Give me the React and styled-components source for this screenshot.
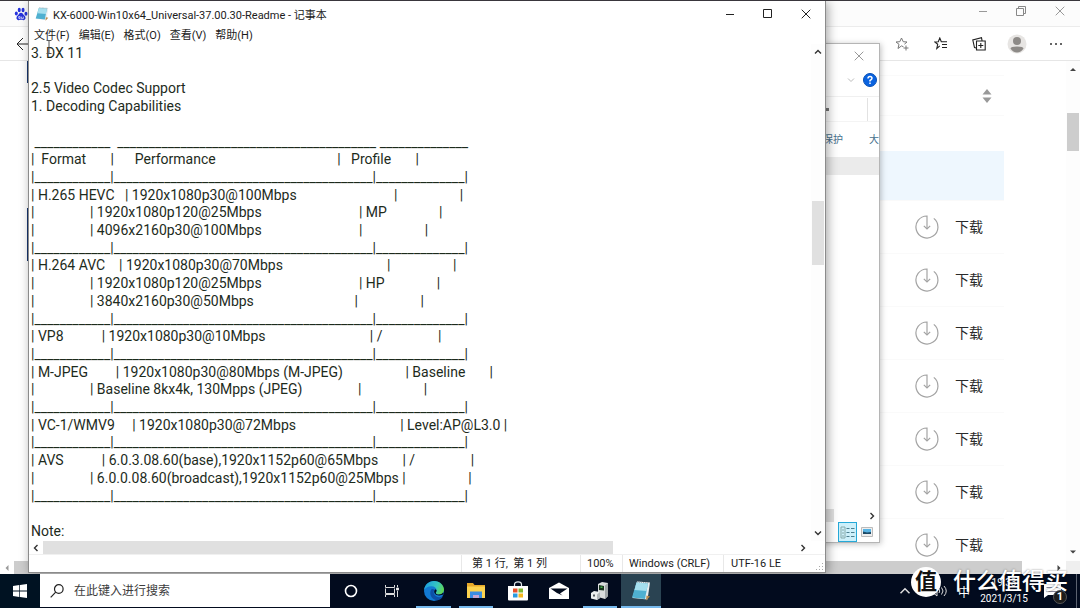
import React from "react"
import styled, { createGlobalStyle, css } from "styled-components"

const GlobalStyle = createGlobalStyle`
  *{
    box-sizing: border-box;
  }
  body{
    margin: 0;
    overflow: hidden;
    background: #fff;
    color: #1b1b1b;
    font-family: Roboto, "Noto Sans CJK SC", sans-serif;
    font-size: 11px;
  }
  button, input, textarea{
    font: inherit;
    color: inherit;
    border: 0;
    padding: 0;
    margin: 0;
    background: none;
    outline: none;
  }
  a{
    color: inherit;
    text-decoration: none;
  }
  svg{
    display: block;
  }
`

const Desktop = styled.div`
  height: 100vh;
  display: flex;
  flex-direction: column;
`

const Workspace = styled.main`
  position: relative;
  flex: 1;
  min-height: 0;
  overflow: hidden;
  border-top: 1px solid #39363c;
`

const IconButton = styled.button`
  display: flex;
  align-items: center;
  justify-content: center;
  width: ${(props) => props.$w || 38}px;
  flex: none;
`

/* browser */

const Browser = styled.section`
  height: 100%;
  display: flex;
  flex-direction: column;
`

const TabStrip = styled.div`
  display: flex;
  justify-content: space-between;
  height: 26px;
  padding: 0 0 6px 14px;
  background: #fcfcfc;
  border-bottom: 1px solid #ececec;
`

const Controls = styled.div`
  display: flex;
`

const Toolbar = styled.div`
  display: flex;
  justify-content: space-between;
  height: 34px;
  padding: 0 5px 0 16px;
  border-bottom: 1px solid #e6e6e6;
`

const PageArea = styled.div`
  flex: 1;
  min-height: 0;
  display: flex;
`

const Page = styled.div`
  flex: 1;
  overflow: hidden;
  padding-right: 62px;
`

const SideMark = styled.div`
  width: 28px;
  display: flex;
  flex-direction: column;
  align-items: flex-end;
  gap: 125px;
`

const Mark = styled.span`
  width: 1px;
  height: ${(props) => props.$h}px;
  background: #17356e;
`

const SortHead = styled.div`
  display: flex;
  align-items: center;
  justify-content: flex-end;
  height: 41px;
  margin-top: 14px;
  padding-right: 12px;
  border-top: 1px solid #fafafa;
  border-bottom: 1px solid #fafafa;
`

const FileList = styled.ul`
  list-style: none;
  margin: 35px 0 0;
  padding: 0;
`

const FileRow = styled.li`
  display: flex;
  align-items: center;
  justify-content: flex-end;
  height: ${(props) => (props.$active ? 50 : 53)}px;
  padding-right: 21px;
  border-bottom: 1px solid #fafafa;
  background: ${(props) => (props.$active ? "#eef7fe" : "none")};
`

const Download = styled.a`
  display: flex;
  align-items: center;
  gap: 16px;
  font-size: 14px;
  line-height: 20px;
  color: #2a2a2a;
`

const VBar = styled.div`
  width: 14px;
  flex: none;
  display: flex;
  flex-direction: column;
  align-items: center;
  background: #fdfdfd;
`

const VThumb = styled.span`
  width: 12px;
  height: ${(props) => props.$h}px;
  background: ${(props) => props.$color || "#e0e0e0"};
`

const HBar = styled.div`
  display: flex;
  align-items: center;
  height: 13px;
  flex: none;
  padding-right: ${(props) => props.$end || 0}px;
`

const HThumb = styled.span`
  flex: ${(props) => props.$grow};
  align-self: stretch;
  background: ${(props) => props.$color || "#e0e0e0"};
`

const Fill = styled.span`
  flex: ${(props) => props.$grow || 1};
`

const Corner = styled.span`
  width: 14px;
  height: 13px;
  background: #efefef;
`

/* file explorer */

const windowFrame = css`
  position: absolute;
  display: flex;
  flex-direction: column;
  background: #fff;
`

const Explorer = styled.section`
  ${windowFrame}
  top: 42px;
  right: 200px;
  bottom: 31px;
  width: 240px;
  border: 1px solid #b5b5b5;
  box-shadow: 1px 1px 6px rgba(0, 0, 0, .25);
`

const ExplorerRow = styled.div`
  display: flex;
  justify-content: flex-end;
  align-items: center;
  height: ${(props) => props.$h}px;
  padding-right: ${(props) => props.$end || 0}px;
`

const Ribbon = styled.div`
  height: 26px;
  margin-top: 4px;
  padding: 0 11px 0 0;
  display: flex;
  justify-content: flex-end;
  align-items: center;
  gap: 38px;
  border-top: 1px solid #f0f0f0;
  border-bottom: 1px solid #f4f4f4;

  i{
    width: 3px;
    height: 3px;
    background: #777;
  }
  span{
    width: 1px;
    height: 23px;
    background: #e2e2e2;
  }
`

const RibbonLabels = styled.div`
  display: flex;
  justify-content: flex-end;
  gap: 26px;
  height: 35px;
  line-height: 35px;
  font-size: 10px;
  color: #46708c;
`

const ColumnBar = styled.div`
  height: 18px;
  background: #ebebeb;
`

const ExplorerBody = styled.div`
  flex: 1;
`

const ViewButton = styled(IconButton)`
  height: 20px;
  border: 1px solid ${(props) => (props.$on ? "#26a9d8" : "transparent")};
  background: ${(props) => (props.$on ? "#cdf0fa" : "none")};
`

/* notepad */

const Notepad = styled.section`
  ${windowFrame}
  top: 0;
  left: 28px;
  right: 254px;
  bottom: 1px;
  border: 1px solid #8b8b8b;
  border-top: 0;
  box-shadow: 2px 1px 10px rgba(0, 0, 0, .35);
`

const TitleBar = styled.header`
  display: flex;
  align-items: stretch;
  height: 26px;
  flex: none;
`

const Title = styled.h1`
  display: flex;
  align-items: center;
  gap: 4px;
  flex: 1;
  margin: 0;
  padding-left: 6px;
  font-size: 11px;
  font-weight: 400;
`

const MenuBar = styled.nav`
  display: flex;
  align-items: center;
  gap: 9px;
  height: 17px;
  flex: none;
  padding-left: 5px;

  button{
    line-height: 17px;
  }
`

const EditArea = styled.div`
  flex: 1;
  min-height: 0;
  display: flex;
`

const TextBox = styled.textarea`
  flex: 1;
  min-width: 0;
  resize: none;
  overflow: hidden;
  white-space: pre;
  padding: 1px 0 0 2px;
  font-size: 14px;
  line-height: 1.265;
  color: #1d2b1c;
`

const StatusBar = styled.footer`
  display: flex;
  justify-content: flex-end;
  height: 18px;
  flex: none;
  border-top: 1px solid #f0f0f0;
`

const StatusCell = styled.span`
  width: ${(props) => props.$w}px;
  padding-left: ${(props) => props.$pad || 7}px;
  line-height: 17px;
  border-left: 1px solid #e8e8e8;
  white-space: pre;
  position: relative;
`

const Grip = styled.svg`
  position: absolute;
  right: 1px;
  bottom: 1px;
`

const Caret = styled.svg`
  position: absolute;
  left: 45px;
  top: 39px;
`

/* taskbar */

const Taskbar = styled.div`
  position: relative;
  display: flex;
  height: 34px;
  flex: none;
  background: #020b1e;
  color: #fff;
`

const Start = styled(IconButton)`
  background: #001222;
`

const Search = styled.label`
  display: flex;
  align-items: center;
  gap: 10px;
  width: 290px;
  padding-left: 10px;
  margin-bottom: 1px;
  background: #fff;
  color: #333;

  input{
    flex: 1;
    font-size: 12px;
  }
  input::placeholder{
    color: #3c3c3c;
    opacity: 1;
  }
`

const Task = styled(IconButton)`
  background: ${(props) => (props.$active ? "#2a4352" : "none")};
  position: relative;

  &::after{
    content: '';
    display: ${(props) => (props.$open ? "block" : "none")};
    position: absolute;
    left: ${(props) => (props.$active ? 0 : 4)}px;
    right: ${(props) => (props.$active ? 0 : 4)}px;
    bottom: 0;
    height: 2px;
    background: #76b9ed;
  }
`

const Tray = styled.div`
  display: flex;
  align-items: center;
  margin-left: auto;
  padding-right: 8px;
  border-right: 1px solid #5b6270;
  margin-right: 3px;
`

const Ime = styled.span`
  width: 16px;
  font-size: 12px;
  text-align: center;
`

const Clock = styled.time`
  width: 64px;
  text-align: center;
  font-size: 10px;
  line-height: 16px;
`

const Notice = styled.button`
  position: relative;
  width: 32px;
  height: 34px;
`

const Count = styled.span`
  position: absolute;
  right: 1px;
  bottom: 4px;
  width: 14px;
  height: 14px;
  border-radius: 50%;
  border: 1px solid #555;
  background: #1c1c1c;
  font-size: 11px;
  font-weight: 700;
  line-height: 12px;
  text-align: center;
`

const Watermark = styled.div`
  position: absolute;
  right: 12px;
  bottom: 10px;
  display: flex;
  align-items: center;
  gap: 12px;
  font-size: 23px;
  font-weight: 500;
  line-height: 32px;
  color: #fff;
  text-shadow: 0 0 2px rgba(0, 0, 0, .5);
`

const Seal = styled.span`
  width: 30px;
  height: 30px;
  border-radius: 50%;
  background: #fff;
  color: #111;
  font-size: 22px;
  font-weight: 700;
  line-height: 30px;
  text-align: center;
  text-shadow: none;
`

const sp = (n) => " ".repeat(n)
const line = (n) => "_".repeat(n)
const rule = `|${line(12)}|${line(41)}|${line(14)}|`

const readme = [
  "3. DX 11",
  "",
  "2.5 Video Codec Support",
  "1. Decoding Capabilities",
  "",
  ` ${line(12)}  ${line(41)} ${line(14)}`,
  `|${sp(2)}Format${sp(7)}|${sp(6)}Performance${sp(35)}|${sp(3)}Profile${sp(7)}|`,
  rule,
  `| H.265 HEVC${sp(3)}| 1920x1080p30@100Mbps${sp(28)}|${sp(18)}|`,
  `|${sp(16)}| 1920x1080p120@25Mbps${sp(28)}| MP${sp(15)}|`,
  `|${sp(16)}| 4096x2160p30@100Mbps${sp(28)}|${sp(18)}|`,
  rule,
  `| H.264 AVC${sp(4)}| 1920x1080p30@70Mbps${sp(30)}|${sp(18)}|`,
  `|${sp(16)}| 1920x1080p120@25Mbps${sp(28)}| HP${sp(15)}|`,
  `|${sp(16)}| 3840x2160p30@50Mbps${sp(29)}|${sp(18)}|`,
  rule,
  `| VP8${sp(11)}| 1920x1080p30@10Mbps${sp(30)}| /${sp(16)}|`,
  rule,
  `| M-JPEG${sp(8)}| 1920x1080p30@80Mbps (M-JPEG)${sp(18)}| Baseline${sp(7)}|`,
  `|${sp(16)}| Baseline 8kx4k, 130Mpps (JPEG)${sp(16)}|${sp(18)}|`,
  rule,
  `| VC-1/WMV9${sp(5)}| 1920x1080p30@72Mbps${sp(30)}| Level:AP@L3.0 |`,
  rule,
  `| AVS${sp(11)}| 6.0.3.08.60(base),1920x1152p60@65Mbps${sp(7)}| /${sp(16)}|`,
  `|${sp(16)}| 6.0.0.08.60(broadcast),1920x1152p60@25Mbps |${sp(18)}|`,
  rule,
  "",
  "Note:",
].join("\n")

const menus = ["文件(F)", "编辑(E)", "格式(O)", "查看(V)", "帮助(H)"]

const chevrons = {
  up: "M1 5.5 4 2.5 7 5.5",
  down: "M1 2.5 4 5.5 7 2.5",
  left: "M5.5 1 2.5 4 5.5 7",
  right: "M2.5 1 5.5 4 2.5 7",
}

const Chevron = ({ dir, size = 8, color = "#333", width = 1.4 }) => (
  <svg width={size} height={size} viewBox="0 0 8 8" fill="none" stroke={color} strokeWidth={width}>
    <path d={chevrons[dir]} />
  </svg>
)

const Triangle = ({ d, color = "#444" }) => (
  <svg width="8" height="8" viewBox="0 0 8 8"><path d={d} fill={color} /></svg>
)

const CloseIcon = ({ color }) => (
  <svg width="10" height="10" viewBox="0 0 10 10" stroke={color}><path d="M.7.7l8.6 8.6M9.3.7.7 9.3" /></svg>
)

const MinIcon = ({ color }) => (
  <svg width="10" height="10" viewBox="0 0 10 10" stroke={color}><path d="M1 5.5h8" /></svg>
)

const NotepadIcon = ({ size }) => (
  <svg width={size} height={size} viewBox="0 0 20 20">
    <path d="M6 .5 19 1.5 16.500 18.500 1.500 17z" fill="#e9eef0" />
    <path d="M15.500 14.500 19 15.500 15 19.500z" fill="#b98a4a" />
    <path d="M5.500 1.500 17 2.500 14 18 1 16.500z" fill="#4fb0d0" />
    <path d="M5.500 1.500 17 2.500 15.500 10 3.500 9z" fill="#a5dfee" />
    <path d="M6 1 18.500 2" stroke="#9aa7ab" strokeDasharray="1 1" />
  </svg>
)

const Paw = () => (
  <svg width="14" height="14" viewBox="0 0 24 24" fill="#2632dc">
    <ellipse cx="4" cy="11" rx="2.6" ry="3.5" />
    <ellipse cx="9" cy="5" rx="2.6" ry="3.8" />
    <ellipse cx="15.5" cy="5" rx="2.6" ry="3.8" />
    <ellipse cx="20.5" cy="11.5" rx="2.6" ry="3.5" />
    <path d="M12 10c-3 0-3.500 3-6 5-2.700 2.200-2.500 7.500 2 7.500 2 0 2.500-.5 4-.5s2 .5 4 .5c4.500 0 4.700-5.300 2-7.500-2.500-2-3-5-6-5z" />
    <path d="M8 16.500h2.500v3.500H8.500zM13 16.500v3.500h3v-3.500" fill="none" stroke="#fff" strokeWidth="1.200" />
  </svg>
)

const DownloadIcon = () => (
  <svg width="24" height="24" viewBox="0 0 24 24" fill="none" stroke="#a3a3a3" strokeWidth="1.200">
    <path d="M12 14V1A11 11 0 1 0 18.800 3.400" />
    <path d="M8.800 10.800 12 14l3.200-3.200" />
  </svg>
)

const Edge = () => (
  <svg width="22" height="22" viewBox="0 0 22 22">
    <defs>
      <linearGradient id="edgeTop" x1="0" x2="1" y1=".3" y2=".6">
        <stop offset="0" stopColor="#1b9de2" />
        <stop offset=".6" stopColor="#36c6c0" />
        <stop offset="1" stopColor="#62d84e" />
      </linearGradient>
    </defs>
    <circle cx="11" cy="11" r="10" fill="#1279d2" />
    <path d="M1 10.500C1.500 4.500 6 1 11 1c6 0 10 4.300 10 8.500 0 3-2.300 5-5 5-2.200 0-3.300-.8-3.300-1.600 0-.7.900-1 .9-2.600C13.600 8 11.500 6.300 8.500 6.300 4.800 6.300 2 8 1 10.500z" fill="url(#edgeTop)" />
    <path d="M8.200 9.500c-2.500 4.500.3 10 5.800 10.800 2.300 0 4.700-1.600 6-4-3.500 1.700-7.800.7-9-2.300-.8-2-.2-3.500.7-4.200-1-.900-2.600-1-3.500-.3z" fill="#0d4fa6" />
    <path d="M13.600 10.300c0 1.600-.9 1.900-.9 2.600 0 .8 1.100 1.600 3.300 1.600 1.700 0 3.200-.8 4.100-2l.5 1.500c-3 2.500-8.600 1.500-9.300-1.500-.3-1.500.2-2.800 1.300-3.200z" fill="#020b1e" />
  </svg>
)

const Folder = () => (
  <svg width="20" height="18" viewBox="0 0 20 18">
    <path d="M1 1h6l1.500 2H19v3H1z" fill="#e6a829" />
    <path d="M1 4.500h18V16H1z" fill="#fcd34f" />
    <path d="M4 16V9.500h12V16h-3v-3H7v3z" fill="#3b8de0" />
    <path d="M7 13h6v3H7z" fill="#c7a6cf" />
  </svg>
)

const Store = () => (
  <svg width="20" height="20" viewBox="0 0 20 20">
    <path d="M6.500 5V3.500C6.500 2 8 .8 10 .8s3.500 1.200 3.500 2.700V5" fill="none" stroke="#dfe6ea" strokeWidth="1.200" />
    <path d="M0 5h20v13.500q0 1-1 1H1q-1 0-1-1z" fill="#fff" />
    <path d="M5 7.500h4.500v4H5z" fill="#e8502b" />
    <path d="M10.500 7.500H15v4h-4.500z" fill="#7db72f" />
    <path d="M5 12.500h4.500v4H5z" fill="#2a9be0" />
    <path d="M10.500 12.500H15v4h-4.500z" fill="#f5b71f" />
  </svg>
)

const Mail = () => (
  <svg width="22" height="18" viewBox="0 0 22 18">
    <path d="M1 6 11 .5 21 6v11H1z" fill="#fff" />
    <path d="M2.500 6.500h17L12 11.500l2.500 2L9 11z" fill="#020b1e" />
  </svg>
)

const Device = () => (
  <svg width="20" height="20" viewBox="0 0 20 20">
    <path d="M8 3 12 1l6 1v13l-3 3-7-2z" fill="#d9dcdd" />
    <path d="M15 4.500 18 2v13l-3 3z" fill="#9fa5a8" />
    <path d="M9 4 14 5v4.500L9 9z" fill="#17321c" />
    <path d="M10.500 5.500h2V7h-2z" fill="#3fae49" />
    <path d="M1 12 4 10l6 1v6l-3 2-6-1.500z" fill="#eceeef" />
    <path d="M3 13.500h2v2H3zM7 14h1.500v2H7z" fill="#555b60" />
    <path d="M7 13.500 10 11v6l-3 2z" fill="#b2b7ba" />
  </svg>
)

const downloads = [1, 2, 3, 4, 5, 6, 7]

function BrowserWindow() {
  return (
    <Browser>
      <TabStrip>
        <IconButton $w={14} aria-label="tab"><svg width="14" height="22" viewBox="0 -7 14 22"><Paw /></svg></IconButton>
        <Controls>
          <IconButton $w={38} aria-label="minimize"><MinIcon color="#999" /></IconButton>
          <IconButton $w={38} aria-label="restore">
            <svg width="10" height="10" viewBox="0 0 10 10" fill="none" stroke="#888">
              <path d="M.5 2.500h7v7h-7zM2.500 2.500v-2h7v7h-2" />
            </svg>
          </IconButton>
          <IconButton $w={40} aria-label="close"><CloseIcon color="#999" /></IconButton>
        </Controls>
      </TabStrip>
      <Toolbar>
        <IconButton $w={14} aria-label="back">
          <svg width="14" height="14" viewBox="0 0 14 14" fill="none" stroke="#222"><path d="M14 7H1.500M7 1 1 7l6 6" /></svg>
        </IconButton>
        <Controls>
          <IconButton $w={38} aria-label="add favorite">
            <svg width="14" height="14" viewBox="0 0 14 14" fill="none" stroke="#777">
              <path d="M8.500 9.800 6.500 8.900 3 11.500l1-4.200L1 5l3.800-.3L6.500 1l1.700 3.700 3.800.3-2.600 2.200M11 8.500v5M8.500 11h5" />
            </svg>
          </IconButton>
          <IconButton $w={40} aria-label="favorites">
            <svg width="14" height="14" viewBox="0 0 14 14" fill="none" stroke="#222" strokeWidth="1.100">
              <path d="M5.800 8.800 2.800 11.500l.9-4.200L.8 5l3.500-.3L5.800 1l1.500 3.700H13M8 7.500h5M8 10.500h5" />
            </svg>
          </IconButton>
          <IconButton $w={36} aria-label="collections">
            <svg width="14" height="14" viewBox="0 0 14 14" fill="none" stroke="#222" strokeWidth="1.100">
              <path d="M4.500 4h8.700v9H4.500zM8.800 6v5M6.300 8.500h5M4.300 11 2.500 10.500.8 3 9.500.8l.6 3" />
            </svg>
          </IconButton>
          <IconButton $w={40} aria-label="profile">
            <svg width="20" height="20" viewBox="0 0 20 20">
              <circle cx="10" cy="10" r="9.500" fill="#e7e5e3" />
              <circle cx="10" cy="7" r="4" fill="#8d8a87" />
              <path d="M3.500 14.500q0-2 6.500-2t6.500 2Q14 18.500 10 18.500t-6.500-4z" fill="#8d8a87" />
            </svg>
          </IconButton>
          <IconButton $w={38} aria-label="more">
            <svg width="14" height="4" viewBox="0 0 14 4" fill="#333">
              <circle cx="2" cy="2" r="1" /><circle cx="7" cy="2" r="1" /><circle cx="12" cy="2" r="1" />
            </svg>
          </IconButton>
        </Controls>
      </Toolbar>
      <PageArea>
        <SideMark><Mark $h={22} /><Mark $h={53} /></SideMark>
        <Page>
          <SortHead>
            <svg width="10" height="14" viewBox="0 0 10 14" fill="#999"><path d="M5 0l4.500 5.500h-9zM5 14l4.500-5.500h-9z" /></svg>
          </SortHead>
          <FileList>
            <FileRow $active />
            {downloads.map((id) => (
              <FileRow key={id}>
                <Download href="#"><DownloadIcon />下载</Download>
              </FileRow>
            ))}
          </FileList>
        </Page>
        <VBar>
          <IconButton $w={14} aria-label="scroll up"><svg width="8" height="14" viewBox="0 -4 8 14"><path d="M1 6 4 3l3 3z" fill="#444" /></svg></IconButton>
          <Fill $grow={38} />
          <VThumb $h={38} $color="#cdcdcd" />
          <Fill $grow={395} />
          <IconButton $w={14} aria-label="scroll down"><svg width="8" height="16" viewBox="0 -3 8 16"><path d="M1 2.500 4 5.500l3-3z" fill="#444" /></svg></IconButton>
        </VBar>
      </PageArea>
      <HBar>
        <IconButton $w={14} aria-label="scroll left"><Triangle d="M5.500 1 2.500 4l3 3z" color="#999" /></IconButton>
        <HThumb $grow={1008} $color="#cdcdcd" />
        <Fill $grow={30} />
        <IconButton $w={14} aria-label="scroll right"><Triangle d="M2.500 1 5.500 4l-3 3z" /></IconButton>
        <Corner />
      </HBar>
    </Browser>
  )
}

function ExplorerWindow() {
  return (
    <Explorer>
      <ExplorerRow $h={24}><IconButton $w={40} aria-label="close"><CloseIcon color="#999" /></IconButton></ExplorerRow>
      <ExplorerRow $h={24}>
        <IconButton $w={20} aria-label="collapse"><Chevron dir="down" color="#bbb" width={1} /></IconButton>
        <IconButton $w={18} aria-label="help">
          <svg width="14" height="14" viewBox="0 0 14 14">
            <circle cx="7" cy="7" r="6.500" fill="#0a63e0" stroke="#0850b4" />
            <path d="M5 5.500Q5 3.500 7 3.500t2 1.800Q9 6.500 7 7.500v1M7 9.500v1.400" fill="none" stroke="#fff" strokeWidth="1.500" />
          </svg>
        </IconButton>
      </ExplorerRow>
      <Ribbon><i /><span /></Ribbon>
      <RibbonLabels><span>保护</span><span>大</span></RibbonLabels>
      <ColumnBar />
      <ExplorerBody />
      <HBar>
        <HThumb $grow={193} />
        <Fill $grow={31} />
        <IconButton $w={14} aria-label="scroll right"><Chevron dir="right" /></IconButton>
      </HBar>
      <ExplorerRow $h={20} $end={3}>
        <ViewButton $w={19} $on aria-label="details">
          <svg width="15" height="13" viewBox="0 0 15 13" fill="none" stroke="#4c7f90">
            <path d="M1 1h4v11H1zM2 4h2M2 7h2M2 10h2" stroke="#8aa" />
            <path d="M6.500 2.500h3M11 2.500h3.500M6.500 6.500h3M11 6.500h3.500M6.500 10.500h3M11 10.500h3.500" />
          </svg>
        </ViewButton>
        <ViewButton $w={19} aria-label="thumbnails">
          <svg width="12" height="10" viewBox="0 0 12 10">
            <path d="M.5.5h11v9H.5z" fill="#eee" stroke="#bbb" />
            <path d="M2 2h8v5H2z" fill="#58b4e4" />
            <path d="M2 7V4.500l4 1L10 5v2z" fill="#1d4a66" />
          </svg>
        </ViewButton>
      </ExplorerRow>
    </Explorer>
  )
}

function NotepadWindow() {
  return (
    <Notepad>
      <TitleBar>
        <Title><NotepadIcon size={14} />KX-6000-Win10x64_Universal-37.00.30-Readme - 记事本</Title>
        <IconButton aria-label="minimize"><MinIcon color="#222" /></IconButton>
        <IconButton aria-label="maximize">
          <svg width="10" height="10" viewBox="0 0 10 10" fill="none" stroke="#222"><path d="M.5.5h8v8h-8z" /></svg>
        </IconButton>
        <IconButton aria-label="close"><CloseIcon color="#222" /></IconButton>
      </TitleBar>
      <MenuBar>
        {menus.map((name) => <button key={name}>{name}</button>)}
      </MenuBar>
      <EditArea>
        <TextBox aria-label="readme" defaultValue={readme} spellCheck={false} wrap="off" />
        <VBar>
          <IconButton $w={14} aria-label="scroll up"><svg width="8" height="16" viewBox="0 -4 8 16" fill="none" stroke="#333" strokeWidth="1.400"><path d={chevrons.up} /></svg></IconButton>
          <Fill $grow={142} />
          <VThumb $h={64} />
          <Fill $grow={262} />
          <IconButton $w={14} aria-label="scroll down"><svg width="8" height="16" viewBox="0 -4 8 16" fill="none" stroke="#333" strokeWidth="1.400"><path d={chevrons.down} /></svg></IconButton>
        </VBar>
      </EditArea>
      <HBar $end={15}>
        <IconButton $w={14} aria-label="scroll left"><Chevron dir="left" /></IconButton>
        <HThumb $grow={569} />
        <Fill $grow={183} />
        <IconButton $w={14} aria-label="scroll right"><Chevron dir="right" /></IconButton>
      </HBar>
      <StatusBar>
        <StatusCell $w={119} $pad={10}>第 1 行,  第 1 列</StatusCell>
        <StatusCell $w={42} $pad={6}>100%</StatusCell>
        <StatusCell $w={101} $pad={6}>Windows (CRLF)</StatusCell>
        <StatusCell $w={102}>
          UTF-16 LE
          <Grip width="8" height="8" viewBox="0 0 8 8" fill="#aaa">
            <path d="M6 0h1v1H6zM3 3h1v1H3zM6 3h1v1H6zM0 6h1v1H0zM3 6h1v1H3zM6 6h1v1H6z" />
          </Grip>
        </StatusCell>
      </StatusBar>
    </Notepad>
  )
}

export default function App() {
  return (
    <Desktop>
      <GlobalStyle />
      <Workspace>
        <BrowserWindow />
        <ExplorerWindow />
        <NotepadWindow />
        <Caret width="8" height="14" viewBox="0 0 8 14" fill="none" stroke="#555"><path d="M1.500.5h5M4 .5v13M1.500 13.500h5" /></Caret>
      </Workspace>
      <Taskbar>
        <Start $w={40} aria-label="start">
          <svg width="14" height="14" viewBox="0 0 14 14" fill="#fff">
            <path d="M0 2 6.300 1v5.600H0zM7 .9 14 0v6.600H7zM0 7.400h6.300V13L0 12zM7 7.400h7V14l-7-.9z" />
          </svg>
        </Start>
        <Search>
          <svg width="14" height="14" viewBox="0 0 14 14" fill="none" stroke="#222" strokeWidth="1.200">
            <circle cx="8.800" cy="5" r="4.300" /><path d="M5.700 8.200.7 13.300" />
          </svg>
          <input type="text" placeholder="在此键入进行搜索" />
        </Search>
        <Task $w={41} aria-label="cortana">
          <svg width="14" height="14" viewBox="0 0 14 14" fill="none" stroke="#fff" strokeWidth="1.600"><circle cx="7" cy="7" r="5.500" /></svg>
        </Task>
        <Task $w={41} aria-label="task view">
          <svg width="14" height="14" viewBox="0 0 14 14" fill="none" stroke="#ddd">
            <path d="M.5 1v2.500h9V1M.5 13v-2.500h9V13M.5 4.500v5h9v-5M12.500 1v2M12.500 7v6" /><path d="M11.500 4h2v2h-2z" fill="#fff" />
          </svg>
        </Task>
        <Task $w={43} $open aria-label="edge"><Edge /></Task>
        <Task $w={42} $open aria-label="explorer"><Folder /></Task>
        <Task $w={41} aria-label="store"><Store /></Task>
        <Task $w={41} aria-label="mail"><Mail /></Task>
        <Task $w={42} $open aria-label="devices"><Device /></Task>
        <Task $w={40} $open $active aria-label="notepad"><NotepadIcon size={20} /></Task>
        <Tray>
          <IconButton $w={34} aria-label="hidden icons"><Chevron dir="up" size={12} color="#ddd" width={1} /></IconButton>
          <IconButton $w={34} aria-label="volume">
            <svg width="18" height="14" viewBox="0 0 18 14" fill="none" stroke="#ddd">
              <path d="M1 5h2.500L7 2v10L3.500 9H1z" /><path d="M9 5q1.500 2 0 4M11.500 3.500q3 3.500 0 7M14 2q4.500 5 0 10" />
            </svg>
          </IconButton>
          <Ime>中</Ime>
          <Clock>19:33<br />2021/3/15</Clock>
          <Notice aria-label="notifications">
            <svg width="32" height="34" viewBox="0 0 32 34"><path d="M8 10h17v11H12l-4 3z" fill="#fff" /><path d="M10.500 13.500h12M10.500 17.500h12" stroke="#889" /></svg>
            <Count>1</Count>
          </Notice>
        </Tray>
        <Watermark><Seal>值</Seal>什么值得买</Watermark>
      </Taskbar>
    </Desktop>
  )
}
